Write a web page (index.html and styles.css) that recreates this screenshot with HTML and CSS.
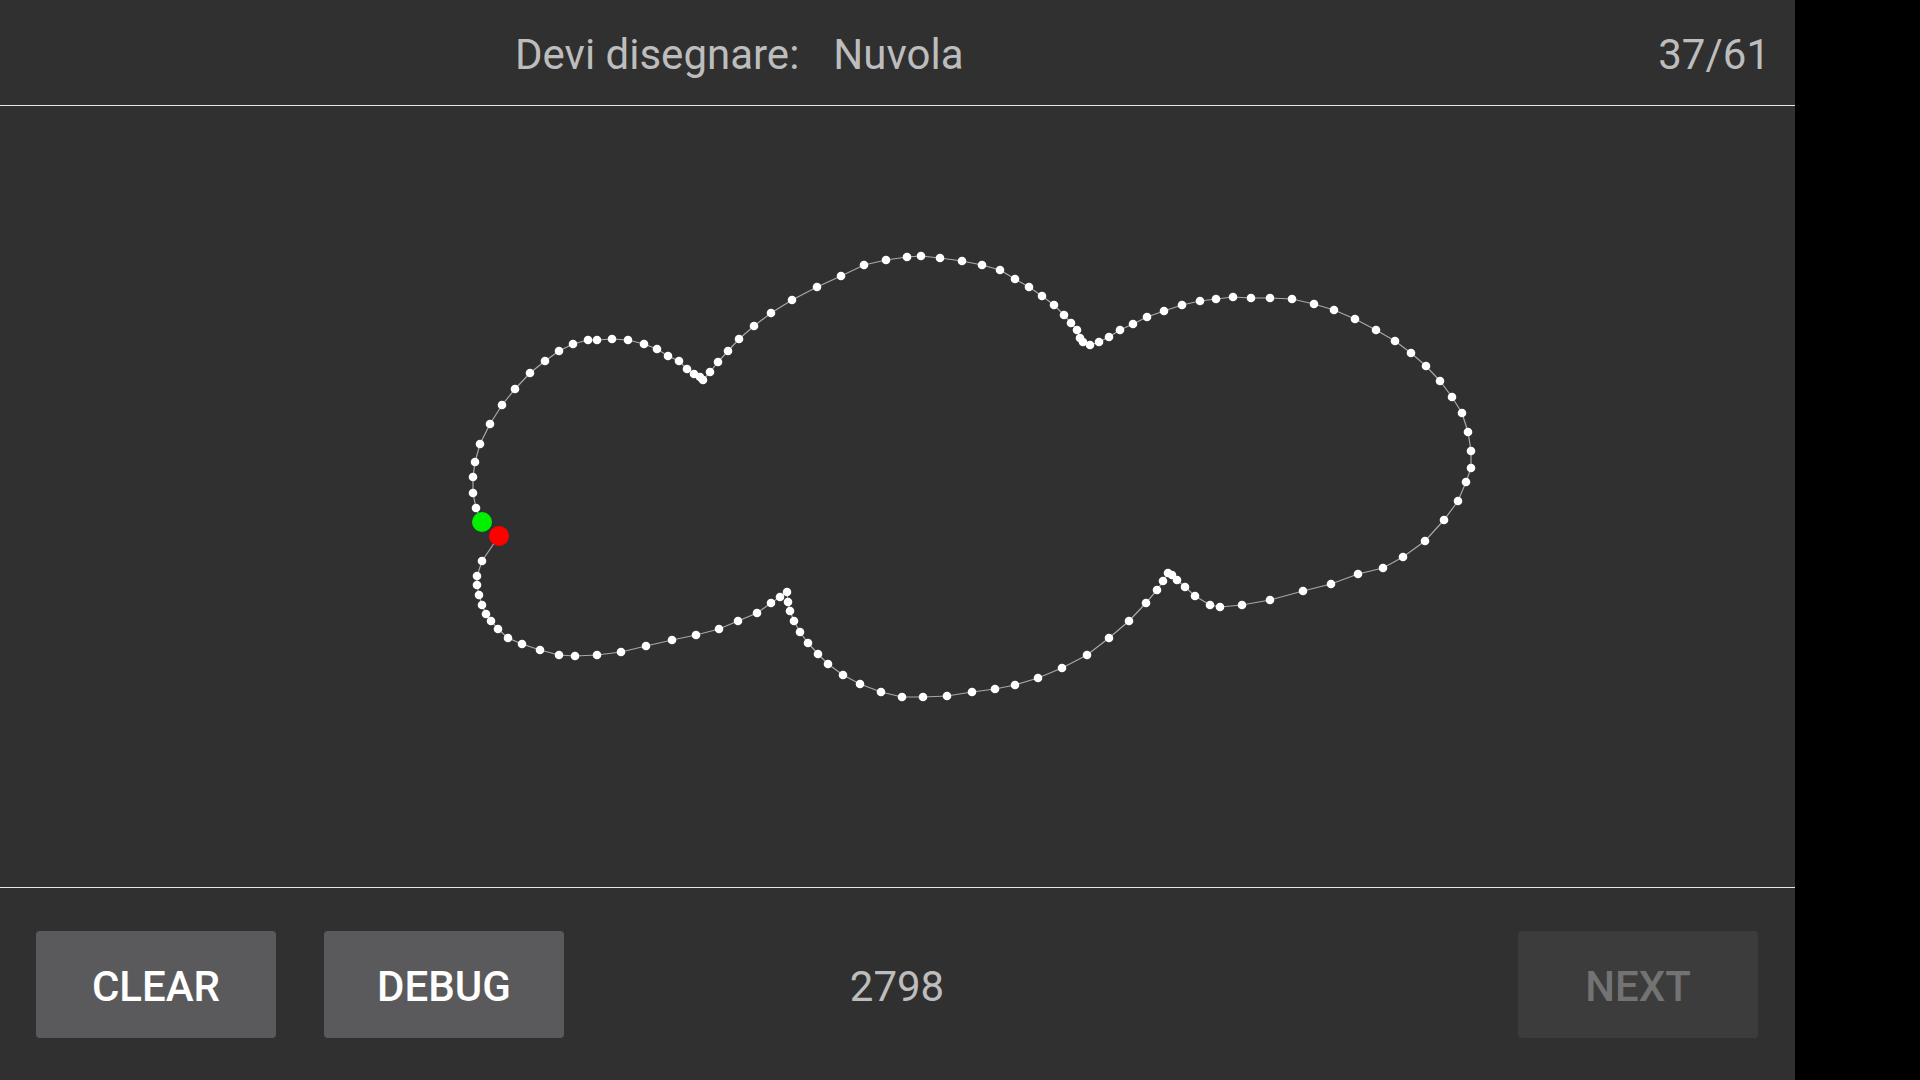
FILE: index.html
```html
<!DOCTYPE html>
<html lang="it">
<head>
<meta charset="utf-8">
<title>Devi disegnare</title>
<link rel="stylesheet" href="styles.css">
</head>
<body>
<div class="screen">
  <main class="panel">
    <header class="topbar">
      <span class="prompt">Devi disegnare:</span>
      <span class="word">Nuvola</span>
      <span class="progress">37/61</span>
    </header>
    <section class="canvas">
      <svg class="drawing" viewBox="0 106 1795 780" width="1795" height="780">
        <defs>
          <marker id="dot" markerUnits="userSpaceOnUse" viewBox="0 0 10 10" markerWidth="10" markerHeight="10" refX="5" refY="5">
            <circle cx="5" cy="5" r="4.3" fill="#ffffff"/>
          </marker>
        </defs>
        <polyline class="stroke" marker-start="url(#dot)" marker-mid="url(#dot)" marker-end="url(#dot)" points="482,522 476,508 473,493 473,477 475,462 480,444 490,424 502,405 515,389 530,373 545,361 559,351 573,344 588,340 597,340 612,339 628,340 644,344 657,349 668,356 679,361 687,369 694,374 700,377 703,380 710,372 718,362 728,351 739,339 754,326 771,313 792,300 817,287 841,276 864,265 886,260 907,257 921,256 940,258 962,261 982,265 1000,270 1015,279 1029,287 1042,296 1054,305 1064,315 1071,323 1077,330 1080,338 1083,342 1090,345 1099,342 1109,337 1120,330 1133,324 1147,317 1164,311 1182,305 1200,301 1216,299 1233,297 1251,298 1270,298 1292,299 1314,304 1334,310 1355,319 1376,330 1395,341 1411,353 1426,366 1440,381 1452,397 1462,413 1468,432 1471,451 1471,468 1466,482 1458,501 1444,520 1425,541 1403,557 1383,568 1358,574 1331,584 1303,591 1270,600 1242,605 1220,607 1210,605 1195,596 1185,587 1177,580 1172,575 1168,573 1163,581 1157,590 1146,603 1129,621 1109,638 1087,655 1062,668 1038,678 1015,685 995,689 972,692 947,696 923,697 902,697 881,692 860,684 843,675 828,664 818,654 808,643 800,632 794,621 790,611 788,602 787,592 780,597 771,603 757,613 738,621 719,629 696,635 672,640 646,646 621,652 597,655 575,656 559,655 540,650 522,644 508,638 498,629 491,621 486,614 482,605 479,595 477,585 477,576 482,561 499,536"/>
        <circle class="end" cx="499" cy="536" r="10"/>
        <circle class="start" cx="482" cy="522" r="10"/>
      </svg>
    </section>
    <footer class="bottombar">
      <div class="left-actions">
        <button class="btn">CLEAR</button>
        <button class="btn">DEBUG</button>
      </div>
      <span class="score">2798</span>
      <div class="right-actions">
        <button class="btn btn-disabled" disabled>NEXT</button>
      </div>
    </footer>
  </main>
  <aside class="side"></aside>
</div>
</body>
</html>
```
FILE: styles.css
```css
* { box-sizing: border-box; }
html, body {
  margin: 0;
  padding: 0;
  width: 1920px;
  height: 1080px;
  overflow: hidden;
  background: #000;
  font-family: Roboto, "Noto Sans", sans-serif;
}
.screen {
  display: flex;
  width: 1920px;
  height: 1080px;
}
.panel {
  width: 1795px;
  height: 1080px;
  background: #303030;
  display: flex;
  flex-direction: column;
}
.side {
  flex: 1;
  background: #000;
}
.topbar {
  height: 106px;
  flex: none;
  display: flex;
  align-items: flex-start;
  padding: 30px 25px 0 515px;
  border-bottom: 1px solid #e6e6e6;
  color: #bdbdbd;
  font-size: 42px;
  line-height: 50px;
}
.word { margin-left: 34px; }
.progress { margin-left: auto; }
.canvas {
  height: 782px;
  flex: none;
  border-bottom: 1px solid #e6e6e6;
}
.drawing { display: block; }
.stroke {
  fill: none;
  stroke: #a8a8a8;
  stroke-width: 1.2;
}
.start { fill: #00f000; }
.end { fill: #ff0000; }
.bottombar {
  flex: 1;
  display: grid;
  grid-template-columns: 1fr auto 1fr;
  align-items: center;
  padding: 0 37px 0 36px;
}
.left-actions {
  display: flex;
  gap: 48px;
}
.right-actions {
  display: flex;
  justify-content: flex-end;
}
.btn {
  width: 240px;
  height: 107px;
  border: none;
  border-radius: 4px;
  background: #5a5a5c;
  color: #ffffff;
  font-family: Roboto, "Noto Sans", sans-serif;
  font-weight: 500;
  font-size: 42px;
  padding: 4px 0 0 0;
}
.btn-disabled {
  background: #3c3c3c;
  color: #737373;
}
.score {
  color: #bdbdbd;
  font-size: 42px;
  padding-top: 4px;
}
```
